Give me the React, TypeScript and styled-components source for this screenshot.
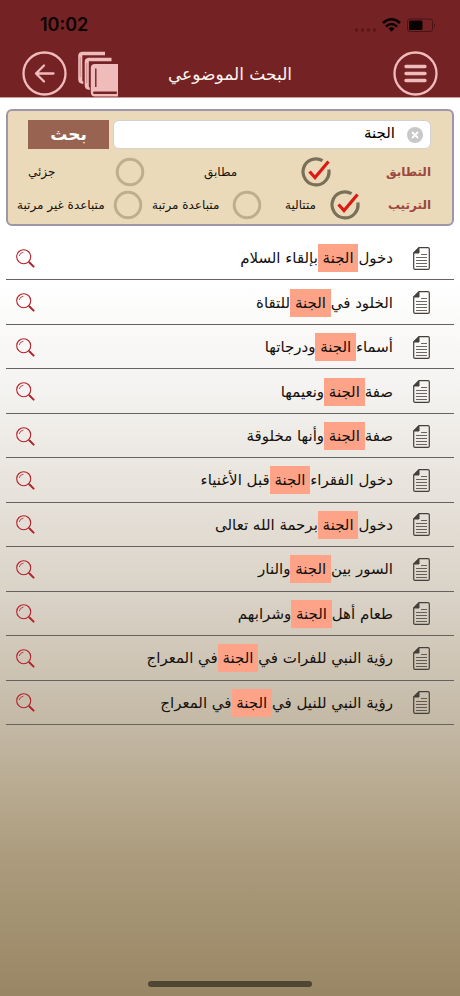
import React, { useState } from "react";
import styled, { createGlobalStyle } from "styled-components";

const GlobalStyle = createGlobalStyle`
  * { box-sizing: border-box; }
  html, body, #root { min-height: 100%; }
  body {
    margin: 0;
    font-family: "DejaVu Sans", "Noto Sans", sans-serif;
    color: #15110e;
  }
  button { font: inherit; border: 0; padding: 0; background: none; cursor: pointer; }
  svg { display: block; }
`;

const Screen = styled.div`
  min-height: 100vh;
  display: flex;
  flex-direction: column;
  background: linear-gradient(
    #ffffff 0%, #ffffff 28%, #f4f3f1 39%, #e9e5de 48%,
    #d8d0c4 61%, #c3b8a4 73%, #ac9c7d 86%, #998664 100%
  );
`;

const Header = styled.header`
  background: #752224;
  border-bottom: 1px solid #c99a9b;
`;

const StatusBar = styled.div`
  display: flex;
  align-items: center;
  justify-content: space-between;
  height: 50px;
  padding: 0 24px 0 40px;
  color: #0a0303;
`;

const Clock = styled.time`
  font: 600 18px/22px Inter, sans-serif;
`;

const NavBar = styled.div`
  display: grid;
  grid-template-columns: 1fr auto 1fr;
  align-items: center;
  height: 47px;
  padding: 0 22px;
`;

const NavGroup = styled.div<{ $end?: boolean }>`
  display: flex;
  gap: 10px;
  justify-content: ${(p) => (p.$end ? "flex-end" : "flex-start")};
`;

const Title = styled.h1`
  margin: 0;
  color: #fff4ee;
  font-size: 17px;
  font-weight: 400;
  line-height: 24px;
`;

const Panel = styled.form`
  margin: 11px 6px 0;
  padding: 9px 21px 3px 9px;
  border: 2px solid #a096ac;
  border-radius: 6px;
  background: #ebdaba;
`;

const SearchRow = styled.div`
  display: flex;
  gap: 4px;
  padding-left: 11px;
`;

const SearchField = styled.div`
  display: flex;
  flex: 1;
  align-items: center;
  gap: 12px;
  min-width: 0;
  height: 29px;
  padding: 0 7px;
  border: 1px solid #d5d0d0;
  border-radius: 6px;
  background: #fff;
`;

const SearchInput = styled.input`
  flex: 1;
  min-width: 0;
  padding: 0 0 3px;
  border: 0;
  outline: 0;
  background: none;
  font: inherit;
  font-size: 15px;
  line-height: 24px;
`;

const SearchButton = styled.button`
  width: 81px;
  height: 29px;
  && {
    background: #996351;
    color: #fff;
    font-size: 17px;
    font-weight: 700;
    line-height: 29px;
  }
`;

const OptionRow = styled.fieldset<{ $columns: string; $inset?: boolean }>`
  display: grid;
  grid-template-columns: ${(p) => p.$columns};
  align-items: center;
  min-width: 0;
  height: 33px;
  margin: 0;
  padding: 0 0 0 ${(p) => (p.$inset ? "11px" : "0")};
  border: 0;
  &:first-of-type { margin-top: 6px; }
`;

const GroupName = styled.span`
  color: #9c4740;
  font-size: 12px;
  font-weight: 700;
`;

const Option = styled.label`
  display: flex;
  align-items: center;
  justify-content: space-between;
  font-size: 12px;
  white-space: nowrap;
`;

const RadioStack = styled.span`
  display: grid;
  flex: none;
  width: 30px;
  height: 30px;
  & > * { grid-area: 1 / 1; }
  svg { pointer-events: none; }
`;

const Radio = styled.input`
  appearance: none;
  width: 30px;
  height: 30px;
  margin: 0;
  border-radius: 50%;
  cursor: pointer;
`;

const Results = styled.ul`
  display: grid;
  grid-auto-rows: 1fr;
  min-height: 489px;
  margin: 10px 6px 0;
  padding: 0;
  list-style: none;
`;

const Result = styled.li`
  display: flex;
  align-items: center;
  gap: 20px;
  padding: 1px 24px 0 10px;
  border-bottom: 1px solid #67625f;
`;

const ResultLink = styled.a`
  flex: 1;
  color: inherit;
  font-size: 15px;
  line-height: 26px;
  text-decoration: none;
`;

const Highlight = styled.mark`
  padding: 5px 0;
  background: #ffa388;
  color: inherit;
`;

const HomeIndicator = styled.div`
  width: 164px;
  height: 6px;
  margin: auto auto 9px;
  border-radius: 3px;
  background: #504733;
`;

const PINK = "#f0bcbb";
const MAROON = "#752224";

const SignalIcon = () => (
  <svg width="84" height="20" viewBox="0 0 84 20" aria-hidden="true">
    <g fill="#561719">
      <rect x="3" y="13.500" width="3" height="3" /><rect x="9" y="13.500" width="3" height="3" />
      <rect x="15" y="13.500" width="3" height="3" /><rect x="21" y="13.500" width="3" height="3" />
    </g>
    <g fill="none" stroke="#080202" strokeWidth="2.600">
      <path d="M31 8Q39.500 .5 48 8" />
      <path d="M34 11.500Q39.500 6.500 45 11.500" />
    </g>
    <path d="M36.500 13.500Q39.500 11 42.500 13.500L39.500 16.800Z" fill="#080202" />
    <rect x="55.500" y="4" width="25" height="12.500" rx="2.500" fill="none" stroke="#471315" />
    <rect x="57" y="5.500" width="13.500" height="9.500" rx="1.500" fill="#080202" />
    <path d="M82 8q2 2.300 0 4.600Z" fill="#471315" />
  </svg>
);

const BackIcon = () => (
  <svg width="45" height="45" viewBox="0 0 45 45" fill="none" stroke={PINK} strokeWidth="2.300" aria-hidden="true">
    <circle cx="22.500" cy="22.500" r="21" />
    <path d="M31.500 22.500H14M22 14.500L14 22.500L22 30.500" strokeLinecap="round" strokeLinejoin="round" />
  </svg>
);

const MenuIcon = () => (
  <svg width="45" height="45" viewBox="0 0 45 45" fill="none" stroke={PINK} aria-hidden="true">
    <circle cx="22.500" cy="22.500" r="21" strokeWidth="2.300" />
    <path d="M13 15.500H32M13 22.500H32M13 29.500H32" strokeWidth="3.400" strokeLinecap="round" />
  </svg>
);

const BooksIcon = () => (
  <svg width="42" height="46" viewBox="0 0 42 46" aria-hidden="true">
    <g fill={PINK}>
      <path d="M5 .8H28V4.300H5.300V29Q5.300 30.500 6.300 30.500V33Q1.200 32.500 1.200 28.500V5Q1.200 1.200 5 .8Z" />
      <path d="M11.500 6.800H34.500V10.300H11.800V35Q11.800 36.500 12.800 36.500V39Q7.700 38.500 7.700 34.500V11Q7.700 7.200 11.500 6.800Z" />
      <path d="M18 13H41V40.500H17.500Q16 40.600 16 41.800T17.500 43H39.800V40H41V45.500H18Q13.800 45.500 13.800 41V17Q13.800 13.200 18 13Z" />
    </g>
    <path d="M18.800 17.500V36" stroke={MAROON} strokeWidth="1.400" />
    <path d="M3.200 6V26M9.700 12V32" stroke={MAROON} strokeWidth=".5" opacity=".6" />
  </svg>
);

const RadioMark = ({ checked }: { checked: boolean }) => (
  <svg width="30" height="30" viewBox="0 0 30 30" fill="none" aria-hidden="true">
    {checked ? (
      <>
        <path d="M21.500 3.600A13 13 0 1 0 27.800 12.500" stroke="#7a705a" strokeWidth="3.200" />
        <path d="M8.500 14.500L14 20.500L27.500 4.500" stroke="#dd1914" strokeWidth="3.200" />
      </>
    ) : (
      <circle cx="15" cy="15" r="12.800" stroke="#beae8c" strokeWidth="3" />
    )}
  </svg>
);

const ClearIcon = () => (
  <svg width="16" height="16" viewBox="0 0 16 16" aria-hidden="true">
    <circle cx="8" cy="8" r="8" fill="#c8c8c8" />
    <path d="M5 5L11 11M11 5L5 11" stroke="#fff" strokeWidth="1.800" />
  </svg>
);

const DocumentIcon = () => (
  <svg width="17" height="23" viewBox="0 0 17 23" fill="none" stroke="#45403b" aria-hidden="true">
    <path d="M6 .7H15Q16.300 .7 16.300 2V21Q16.300 22.300 15 22.300H2Q.7 22.300 .7 21V6Z" strokeWidth="1.200" />
    <path d="M6 .7V6H.7Z" fill="#45403b" />
    <path d="M8 7.500H14M3 10.500H14M3 13.500H14M3 16.500H14M3 19.500H14" strokeWidth=".8" />
  </svg>
);

const MagnifierIcon = () => (
  <svg width="19" height="19" viewBox="0 0 19 19" fill="none" stroke="#b3232b" aria-hidden="true">
    <circle cx="7.700" cy="7.700" r="7" strokeWidth="1.100" />
    <path d="M3.200 7Q4 3.500 7.500 3.200" strokeWidth=".8" />
    <path d="M12.500 12.500L14 14" strokeWidth="1.300" />
    <path d="M13.700 13.700L17.600 17.600" strokeWidth="2" strokeLinecap="round" />
  </svg>
);

type ChoiceProps = { group: string; text: string; value: string; onPick: (v: string) => void };

const Choice = ({ group, text, value, onPick }: ChoiceProps) => (
  <Option>
    <RadioStack>
      <Radio type="radio" name={group} checked={value === text} onChange={() => onPick(text)} />
      <RadioMark checked={value === text} />
    </RadioStack>
    <span>{text}</span>
  </Option>
);

const TERM = "الجنة";

const RESULTS: [string, string][] = [
  ["دخول", "بإلقاء السلام"],
  ["الخلود في", "للتقاة"],
  ["أسماء", "ودرجاتها"],
  ["صفة", "ونعيمها"],
  ["صفة", "وأنها مخلوقة"],
  ["دخول الفقراء", "قبل الأغنياء"],
  ["دخول", "برحمة الله تعالى"],
  ["السور بين", "والنار"],
  ["طعام أهل", "وشرابهم"],
  ["رؤية النبي للفرات في", "في المعراج"],
  ["رؤية النبي للنيل في", "في المعراج"],
];

export default function App() {
  const [query, setQuery] = useState(TERM);
  const [match, setMatch] = useState("مطابق");
  const [order, setOrder] = useState("متتالية");

  return (
    <Screen dir="rtl" lang="ar">
      <GlobalStyle />
      <Header>
        <StatusBar dir="ltr">
          <Clock>10:02</Clock>
          <SignalIcon />
        </StatusBar>
        <NavBar>
          <NavGroup>
            <button type="button" aria-label="القائمة"><MenuIcon /></button>
          </NavGroup>
          <Title>البحث الموضوعي</Title>
          <NavGroup $end>
            <button type="button" aria-label="الكتب"><BooksIcon /></button>
            <button type="button" aria-label="رجوع"><BackIcon /></button>
          </NavGroup>
        </NavBar>
      </Header>

      <Panel onSubmit={(e) => e.preventDefault()}>
        <SearchRow>
          <SearchField>
            <button type="button" aria-label="مسح" onClick={() => setQuery("")}><ClearIcon /></button>
            <SearchInput aria-label="نص البحث" value={query} onChange={(e) => setQuery(e.target.value)} />
          </SearchField>
          <SearchButton type="submit">بحث</SearchButton>
        </SearchRow>
        <OptionRow $columns="100fr 127fr 59fr 117fr" $inset aria-label="التطابق">
          <GroupName>التطابق</GroupName>
          <Choice group="match" text="مطابق" value={match} onPick={setMatch} />
          <span />
          <Choice group="match" text="جزئي" value={match} onPick={setMatch} />
        </OptionRow>
        <OptionRow $columns="71fr 75fr 23fr 110fr 9fr 126fr" aria-label="الترتيب">
          <GroupName>الترتيب</GroupName>
          <Choice group="order" text="متتالية" value={order} onPick={setOrder} />
          <span />
          <Choice group="order" text="متباعدة مرتبة" value={order} onPick={setOrder} />
          <span />
          <Choice group="order" text="متباعدة غير مرتبة" value={order} onPick={setOrder} />
        </OptionRow>
      </Panel>

      <Results>
        {RESULTS.map(([before, after]) => (
          <Result key={before + after}>
            <DocumentIcon />
            <ResultLink href="#">
              {before}
              <Highlight> {TERM} </Highlight>
              {after}
            </ResultLink>
            <button type="button" aria-label="معاينة"><MagnifierIcon /></button>
          </Result>
        ))}
      </Results>
      <HomeIndicator />
    </Screen>
  );
}
